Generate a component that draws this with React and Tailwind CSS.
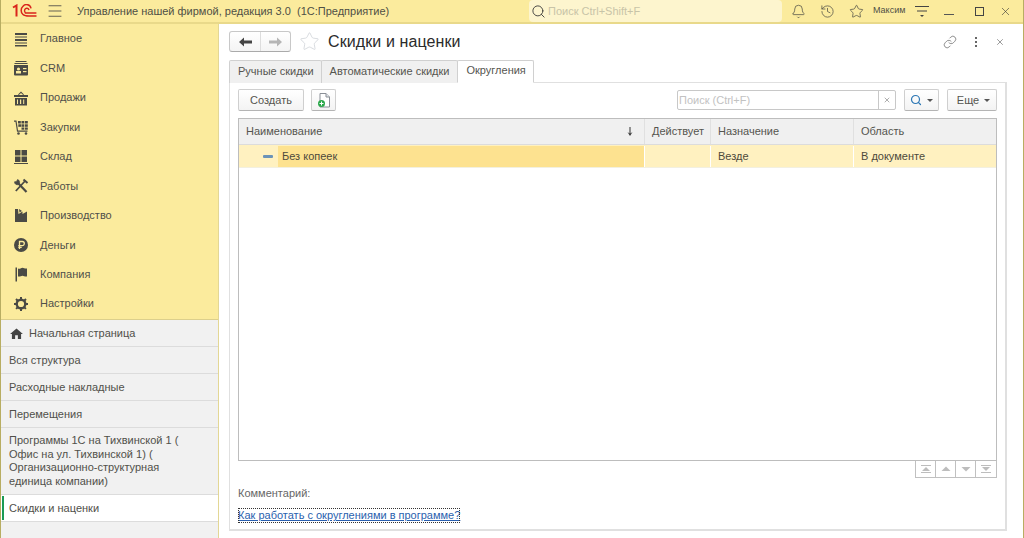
import React from "react";
import { Bell, History, Star, Link, Search, X, Menu } from "lucide-react";

const ink = "#4a4a45";

// section icons, drawn by hand to match the 1C glyphs
const icons = {
  main: (
    <g fill={ink}>
      <rect x="2" y="2" width="12" height="2" />
      <rect x="2" y="5.5" width="12" height="1" />
      <rect x="2" y="8" width="12" height="2" />
      <rect x="2" y="11.5" width="12" height="1" />
      <rect x="2" y="14" width="12" height="1.5" />
    </g>
  ),
  crm: (
    <g fill={ink}>
      <rect x="2.5" y="1" width="11" height="1" />
      <rect x="1.5" y="3" width="13" height="1" />
      <path d="M1 5h14v9.5a1 1 0 0 1-1 1H2a1 1 0 0 1-1-1z" />
      <circle cx="5.5" cy="9" r="1.6" fill="#fbeb9d" />
      <rect x="3" y="11" width="5" height="2.5" fill="#fbeb9d" />
      <rect x="10" y="8" width="3.5" height="1.2" fill="#fbeb9d" />
      <rect x="10" y="11" width="3.5" height="1.2" fill="#fbeb9d" />
    </g>
  ),
  sales: (
    <g fill={ink}>
      <path d="M5 4.5 8 1.5l3 3-.8.6L8 3 5.8 5.1z" />
      <rect x="1" y="5" width="14" height="2" />
      <path d="M2 8h12v7.5H2zM4 9.5v4.5h1V9.5zm3 0v4.5h1.200V9.500zm3.200 0v4.500h1V9.500z" fillRule="evenodd" />
    </g>
  ),
  buy: (
    <g fill={ink}>
      <path d="M1 1.500h2.500l1.500 10h9.500v1.200H4L2.500 2.700H1z" />
      <rect x="5" y="2" width="2.800" height="2.500" />
      <rect x="8.500" y="2" width="2.800" height="2.500" />
      <rect x="12" y="2" width="2.800" height="2.500" />
      <rect x="5.300" y="5.300" width="2.800" height="2.500" />
      <rect x="8.500" y="5.300" width="2.800" height="2.500" />
      <rect x="12" y="5.300" width="2.800" height="2.500" />
      <rect x="8.500" y="8.500" width="2.800" height="2.200" />
      <rect x="12" y="8.500" width="2.800" height="2.200" />
      <circle cx="5.500" cy="14.500" r="1.300" />
      <circle cx="13" cy="14.500" r="1.300" />
    </g>
  ),
  stock: (
    <g fill={ink}>
      <rect x="2" y="2" width="5.500" height="5.500" />
      <rect x="8.500" y="2" width="5.500" height="5.500" />
      <rect x="2" y="8.500" width="5.500" height="5.500" />
      <rect x="8.500" y="8.500" width="5.500" height="5.500" />
      <rect x="1" y="15" width="14" height="1" />
    </g>
  ),
  work: (
    <g fill="none" stroke={ink}>
      <path d="M5 5 13.500 14" strokeWidth="2.200" />
      <path d="M1.500 3.800A2.800 2.800 0 0 0 5.500 6.500 2.800 2.800 0 0 0 4.500 1.500L3.500 3.500z" fill={ink} strokeWidth="0.600" />
      <path d="M12.500 2.500 2.800 13" strokeWidth="1.800" />
      <path d="M10.500 1.500l4 3.500" strokeWidth="2" />
    </g>
  ),
  prod: (
    <g fill={ink}>
      <path d="M2 2h3l.5 5 4-2.500V7l4.500-2.500V15H2z" />
      <path d="M6 2l3 2-2.500 1.500z" />
    </g>
  ),
  money: (
    <g>
      <circle cx="8" cy="8" r="7" fill={ink} />
      <path d="M6.500 12V4.500h2.700a2 2 0 0 1 0 4.200H5.300M5.300 10.400h3.400" stroke="#fbeb9d" strokeWidth="1.300" fill="none" />
    </g>
  ),
  company: (
    <g fill={ink}>
      <rect x="2.500" y="1.500" width="1.500" height="14" />
      <path d="M5 2.500c2 1 3-.8 4.500-.8s2 1 4.500.8v8c-2.500.2-3-.8-4.500-.8S7 11 5 10.500z" />
    </g>
  ),
  settings: (
    <g>
      <circle cx="8" cy="8" r="4.300" fill="none" stroke={ink} strokeWidth="2.400" />
      <path d="M8 1v14M1 8h14M3 3l10 10M13 3 3 13" stroke={ink} strokeWidth="2" strokeDasharray="2.500 9" />
    </g>
  ),
};

const sections = [
  ["main", "Главное"],
  ["crm", "CRM"],
  ["sales", "Продажи"],
  ["buy", "Закупки"],
  ["stock", "Склад"],
  ["work", "Работы"],
  ["prod", "Производство"],
  ["money", "Деньги"],
  ["company", "Компания"],
  ["settings", "Настройки"],
];

function Logo() {
  return (
    <svg width="25" height="14" viewBox="0 0 25 14" className="ml-[11px]">
      <g fill="none" stroke="#d9251c">
        <path d="M1 3.500 4.500 1.500V12.500" strokeWidth="2" />
        <path d="M19 4.300A4.500 4.500 0 0 0 11 2.300 5.500 5.500 0 0 0 11 10.500q2 2 8.500 1.500h5" strokeWidth="1.500" />
        <path d="M17 6A2.300 2.300 0 0 0 12.800 5.500q-1 1.800.6 3.500h11" strokeWidth="1.500" />
      </g>
    </svg>
  );
}

function TopBar() {
  return (
    <div className="h-6 shrink-0 flex items-center bg-[#fbeb9d] border-b-2 border-[#e9d98a] text-[#4f4f45]">
      <Logo />
      <Menu size={18} strokeWidth={1.1} className="ml-[9px] text-[#444]" />
      <span className="ml-[13px] w-[452px] text-[11px] whitespace-nowrap">
        Управление нашей фирмой, редакция 3.0&nbsp; (1С:Предприятие)
      </span>
      <div className="w-[253px] h-[22px] flex items-center bg-[#fdf5ce] rounded-sm">
        <Search size={15} strokeWidth={1.4} className="ml-[2px] text-[#333]" />
        <span className="ml-[2px] text-[11px] text-[#c8c4a8]">Поиск Ctrl+Shift+F</span>
      </div>
      <div className="ml-[9px] flex items-center gap-[14px]">
        <Bell size={15} strokeWidth={1.2} />
        <History size={15} strokeWidth={1.2} />
        <Star size={15} strokeWidth={1.2} />
      </div>
      <span className="ml-[9px] text-[9px] font-medium">Максим</span>
      <svg width="14" height="14" viewBox="0 0 14 14" className="ml-[10px]">
        <path d="M0 2.500h14M2 7h10" stroke="#444" fill="none" />
        <path d="M5 11h4l-2 2z" fill="#444" />
      </svg>
      <div className="ml-[15px] w-[10px] h-[1.500px] mt-[7px] bg-[#555]" />
      <div className="ml-[21px] w-[9px] h-[9px] border border-[#444]" />
      <X size={13} strokeWidth={1.1} className="ml-[15px] text-[#333]" />
    </div>
  );
}

function Sidebar() {
  const pages = [
    "Вся структура",
    "Расходные накладные",
    "Перемещения",
  ];
  const longTitle = "Программы 1С на Тихвинской 1 ( Офис на ул. Тихвинской 1) ( Организационно-структурная единица компании)";
  return (
    <aside className="w-[218px] shrink-0 flex flex-col border-r border-[#e3d795] bg-[#f1f1f1] text-[11px] text-[#50504a]">
      <nav className="h-[296px] shrink-0 bg-[#fbeb9d] border-b border-[#dccf8c]">
        {sections.map(([key, label]) => (
          <div key={key} className="h-[29.450px] flex items-center pl-[12px]">
            <svg width="16" height="16" viewBox="0 0 16 16">{icons[key]}</svg>
            <span className="ml-[11px]">{label}</span>
          </div>
        ))}
      </nav>
      <div className="h-[27px] flex items-center pl-[9px] border-b border-[#dcdcdc]">
        <svg width="13" height="11" viewBox="0 0 14 12" fill="#444">
          <path d="M7 .5 14 6.500h-2V12H8.500V8h-3v4H2V6.500H0z" />
        </svg>
        <span className="ml-[6px]">Начальная страница</span>
      </div>
      {pages.map((p) => (
        <div key={p} className="h-[27px] flex items-center pl-[8px] border-b border-[#dcdcdc]">{p}</div>
      ))}
      <div className="h-[67px] flex items-center pl-[8px] pr-[30px] border-b border-[#dcdcdc] leading-[13.500px]">{longTitle}</div>
      <div className="h-[27px] flex items-center bg-white border-b border-[#dcdcdc]">
        <div className="ml-[1px] w-[2px] h-[24px] bg-[#1b9a55]" />
        <span className="ml-[5px]">Скидки и наценки</span>
      </div>
    </aside>
  );
}

function Btn({ className = "", children }) {
  return (
    <div className={`h-[22px] flex items-center justify-center rounded-[2px] border border-[#cfcfcf] border-b-[#b4b4b4] bg-gradient-to-b from-white to-[#f3f3f3] text-[#55554f] ${className}`}>
      {children}
    </div>
  );
}

function Caret() {
  return <div className="ml-[5px] mt-[1px] w-0 h-0 border-x-[3px] border-t-[3px] border-x-transparent border-t-[#555]" />;
}

function Tab({ active, className = "", children }) {
  return (
    <div className={`h-[23px] flex items-center pl-2 pb-[2px] rounded-t-[2px] border border-[#d0d0d0] ${active ? "bg-white border-b-white relative -mb-px" : "bg-[#f0f0f0] border-b-0 -mr-px"} ${className}`}>
      {children}
    </div>
  );
}

function Th({ className = "", children }) {
  return <div className={`flex items-center px-[7px] border-r border-[#e0e0e0] last:border-r-0 ${className}`}>{children}</div>;
}

function PagerBtn({ d }) {
  return (
    <div className="w-5 flex items-center justify-center border-r border-[#c0c0c0] last:border-r-0">
      <svg width="10" height="8" viewBox="0 0 10 8" fill="#bdbdbd"><path d={d} /></svg>
    </div>
  );
}

function Content() {
  return (
    <main className="flex-1 min-w-0 flex flex-col px-[10px] pt-[7px] text-[11px] text-[#55554f]">
      {/* header row */}
      <div className="h-[21px] shrink-0 flex items-center">
        <div className="w-[62px] h-[21px] flex rounded-[3px] border border-[#c8c8c8] border-b-[#aaa] bg-gradient-to-b from-white to-[#f4f4f4]">
          <div className="w-[31px] flex items-center justify-center border-r border-[#ddd]">
            <svg width="13" height="10" viewBox="0 0 13 10" fill="#444"><path d="M0 5 5 .5V3.500h8v3H5V9.500z" /></svg>
          </div>
          <div className="flex-1 flex items-center justify-center">
            <svg width="13" height="10" viewBox="0 0 13 10" fill="#b5b5b5"><path d="M13 5 8 .5V3.500H0v3h8V9.500z" /></svg>
          </div>
        </div>
        <Star size={21} strokeWidth={0.8} className="ml-[8px] text-[#c9cdd3]" />
        <h1 className="ml-[8px] text-[16px] tracking-[0.1px] text-[#2b2b2b]">Скидки и наценки</h1>
        <div className="ml-auto flex items-center mr-[8px]">
          <Link size={14} strokeWidth={1.1} className="text-[#555]" />
          <svg width="4" height="12" viewBox="0 0 4 12" fill="#666" className="ml-[17px]">
            <rect x="1" y="1" width="2" height="2" /><rect x="1" y="5" width="2" height="2" /><rect x="1" y="9" width="2" height="2" />
          </svg>
          <X size={10} strokeWidth={1.4} className="ml-[17px] text-[#555]" />
        </div>
      </div>

      {/* tabs */}
      <div className="mt-[8px] h-[23px] shrink-0 flex relative z-10">
        <Tab className="pr-[7px]">Ручные скидки</Tab>
        <Tab className="pr-2">Автоматические скидки</Tab>
        <Tab active className="pr-[7px]">Округления</Tab>
      </div>

      {/* tab panel */}
      <section className="w-[778px] h-[449px] -mt-px flex flex-col border-2 border-t border-l border-[#e0e0e0] px-2 pt-[6px]">
        <div className="h-[22px] shrink-0 flex items-center">
          <Btn className="w-[66px]">Создать</Btn>
          <Btn className="ml-[7px] w-[25px]">
            <svg width="14" height="15" viewBox="0 0 14 15">
              <path d="M3 .500h6l3.500 3.500v10H3z" fill="#fff" stroke="#8a8f96" />
              <path d="M9 .500V4h3.500" fill="#dfe3e8" stroke="#8a8f96" />
              <circle cx="4.500" cy="10.500" r="3.500" fill="#2aa84a" />
              <path d="M4.500 8.500v4M2.500 10.500h4" stroke="#fff" />
            </svg>
          </Btn>
          <div className="ml-auto w-[219px] h-5 flex items-center rounded-[2px] border border-[#c8c8c8]">
            <span className="flex-1 pl-px text-[#c2c2c2]">Поиск (Ctrl+F)</span>
            <div className="w-[17px] h-full flex items-center justify-center border-l border-[#c8c8c8]">
              <X size={8} strokeWidth={1.6} className="text-[#666]" />
            </div>
          </div>
          <Btn className="ml-2 w-[35px]">
            <Search size={12} strokeWidth={2.4} className="text-[#2d78b5]" />
            <Caret />
          </Btn>
          <Btn className="ml-2 w-[50px] pl-[3px]">
            Еще
            <Caret />
          </Btn>
        </div>

        {/* list */}
        <div className="mt-[7px] h-[343px] shrink-0 flex flex-col border border-[#bdbdbd]">
          <div className="h-[26px] shrink-0 grid grid-cols-[406px_66px_143px_1fr] bg-[#f0f0f0] border-b border-[#dcdcdc]">
            <Th className="justify-between">
              Наименование
              <svg width="6" height="9" viewBox="0 0 6 9" fill="#333" className="mr-[4px]"><path d="M2.500 0h1v6.500L5.500 5 3 9 .5 5l2 1.500z" /></svg>
            </Th>
            <Th>Действует</Th>
            <Th>Назначение</Th>
            <Th>Область</Th>
          </div>
          <div className="h-[23px] pt-px shrink-0 grid grid-cols-[406px_66px_143px_1fr] bg-[#fff1c0] border-b border-[#f3f0e0] text-[#4d4a3c]">
            <div className="flex items-center border-r border-[#fff]">
              <div className="w-[39px] h-full flex items-center pl-[24px]">
                <div className="w-[10px] h-[3px] bg-[#6b93b8] rounded-[1px]" />
              </div>
              <div className="flex-1 h-full flex items-center pl-[4px] bg-[#fde290]">Без копеек</div>
            </div>
            <Th className="border-[#fff]" />
            <Th className="border-[#fff]">Везде</Th>
            <Th>В документе</Th>
          </div>
        </div>

        {/* pager */}
        <div className="self-end h-[17px] shrink-0 flex border border-t-0 border-[#c0c0c0]">
          <PagerBtn d="M0 0h10v1H0zM5 2l4 4H1zM0 7h10v1H0z" />
          <PagerBtn d="M5 1.500l4.500 4.500H.5z" />
          <PagerBtn d="M.5 2h9L5 6.500z" />
          <PagerBtn d="M0 0h10v1H0zM1 2h8L5 6zM0 7h10v1H0z" />
        </div>

        <div className="mt-[7px] h-4 flex items-center text-[#666]">Комментарий:</div>
        <a className="mt-[7px] self-start h-[15px] leading-[14px] outline-1 outline-dotted outline-[#333] -outline-offset-1 text-[#2a5fae] underline whitespace-nowrap">
          Как работать с округлениями в программе?
        </a>
      </section>
    </main>
  );
}

export default function App() {
  return (
    <div className="w-[1024px] h-[538px] overflow-hidden flex flex-col bg-white border-x border-[#b8ad62] font-['Liberation_Sans',Arial,sans-serif]">
      <TopBar />
      <div className="flex-1 min-h-0 flex">
        <Sidebar />
        <Content />
      </div>
    </div>
  );
}
